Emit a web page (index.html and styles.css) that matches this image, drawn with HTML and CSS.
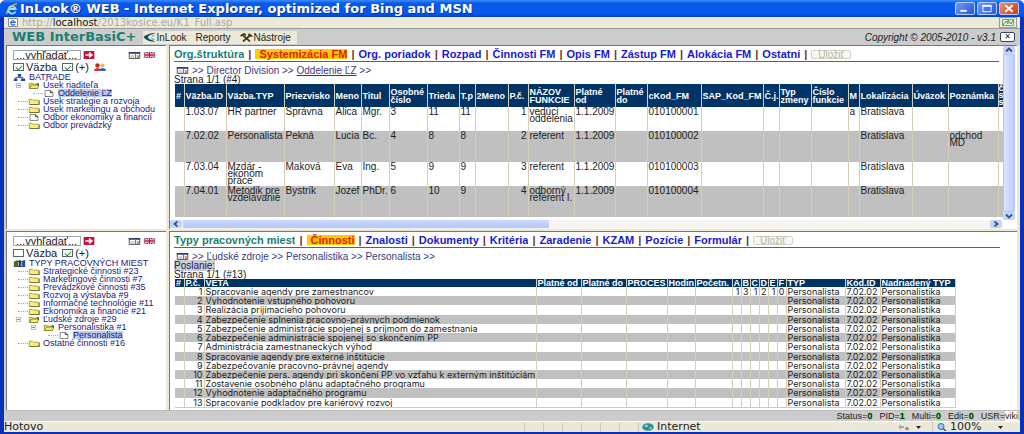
FILE: index.html
```html
<!DOCTYPE html>
<html lang="sk">
<head>
<meta charset="utf-8">
<title>InLook® WEB</title>
<link rel="stylesheet" href="styles.css">
</head>
<body>
<svg class="defs" aria-hidden="true">
  <symbol id="folder" viewBox="0 0 12 8"><path d="M.5 1.5h3.5l1 1h6.500v5H.5z" fill="#f5ef7a" stroke="#a39a3c"/><path d="M1 7.500h11V3" fill="none" stroke="#6d6628"/></symbol>
  <symbol id="open" viewBox="0 0 12 8"><path d="M.5 7.500v-6h3.500l1 1h5v5z" fill="#e8dd55" stroke="#a39a3c"/><path d="M1 7.500l2-4h8.500l-1.500 4z" fill="#f5ef7a" stroke="#82792c"/><path d="M9 2h2v2" stroke="#222" fill="none"/></symbol>
  <symbol id="page" viewBox="0 0 12 8"><path d="M1.500.5h6l3 2.500v4.500h-9z" fill="#fff" stroke="#777"/><path d="M7.500.5v2.500h3" fill="none" stroke="#333"/></symbol>
  <symbol id="minus" viewBox="0 0 7 7"><path d="M.5.5h6v6h-6z" fill="#fff" stroke="#999"/><path d="M2 3.500h3" stroke="#222"/></symbol>
  <symbol id="card" viewBox="0 0 13 8"><path d="M.5.5h12v7H.5z" fill="#fff" stroke="#444"/><path d="M0 1h13" stroke="#333a70" stroke-width="2"/><path d="M2 4.500h4M2 6h4" stroke="#aaa"/><path d="M7.500 2v5" stroke="#555"/><path d="M9 4.500h2.500M9 6h2.500" stroke="#a33"/></symbol>
  <symbol id="flag" viewBox="0 0 13 7"><path d="M0 0h13v7H0z" fill="#35408c"/><path d="M0 0l13 7M13 0L0 7" stroke="#fff" stroke-width="1.600"/><path d="M0 0l13 7M13 0L0 7" stroke="#c23" stroke-width=".7"/><path d="M6.500 0v7M0 3.500h13" stroke="#fff" stroke-width="3"/><path d="M6.500 0v7M0 3.500h13" stroke="#c8102e" stroke-width="1.700"/></symbol>
  <symbol id="go" viewBox="0 0 12 9"><path d="M0 0h12v9H0z" fill="#c8103c"/><path d="M2 4.500h6M6 1.800l3.200 2.700L6 7.200" fill="none" stroke="#fff" stroke-width="1.800"/></symbol>
  <symbol id="left" viewBox="0 0 12 8"><path d="M7.500 1.500L4.500 4l3 2.500" fill="none" stroke="#3a5488" stroke-width="1.800"/></symbol>
  <symbol id="right" viewBox="0 0 12 8"><path d="M4.500 1.500l3 2.500-3 2.500" fill="none" stroke="#3a5488" stroke-width="1.800"/></symbol>
  <symbol id="up" viewBox="0 0 12 8"><path d="M3 5.500l3-3 3 3" fill="none" stroke="#3a5488" stroke-width="1.800"/></symbol>
  <symbol id="down" viewBox="0 0 12 8"><path d="M3 2.500l3 3 3-3" fill="none" stroke="#3a5488" stroke-width="1.800"/></symbol>
</svg>
<div class="window">
  <header class="titlebar">
    <svg class="ie" viewBox="0 0 12 12"><path d="M9.500 8.500A3.700 3.700 0 1 1 9.700 6H3.500" fill="none" stroke="#9fe0ff" stroke-width="1.800"/><path d="M1 11C0 8 6 1 11 1" fill="none" stroke="#f7c93c" stroke-width="1.200"/></svg>
    <h1 class="caption">InLook® WEB - Internet Explorer, optimized for Bing and MSN</h1>
    <button class="wbtn" aria-label="Minimize"><svg viewBox="0 0 18 12"><path d="M4 8.500h7" stroke="#fff" stroke-width="2"/></svg></button>
    <button class="wbtn" aria-label="Maximize"><svg viewBox="0 0 18 12"><path d="M4.500 3h9v6.500h-9z" fill="none" stroke="#fff"/><path d="M4 3h10" stroke="#fff" stroke-width="2"/></svg></button>
    <button class="wbtn close" aria-label="Close"><svg viewBox="0 0 18 12"><path d="M5 2.500l8 7M13 2.500l-8 7" stroke="#fff" stroke-width="2"/></svg></button>
  </header>
  <div class="address">
    <svg class="favicon" viewBox="0 0 10 9"><path d="M.5.5h9v8h-9z" fill="#fff" stroke="#889"/><path d="M7 6A2.200 2.200 0 1 1 7.200 4.500H3" fill="none" stroke="#2765c8" stroke-width="1.200"/></svg>
    <span class="url">http://<b>localhost</b>/2013kosice.eu/K1_Full.asp</span>
    <button class="compat" aria-label="Compatibility view"><svg viewBox="0 0 16 9"><path d="M2.500 1.500h11v6h-11z" fill="#e8f5e4" stroke="#7c9c78"/><path d="M3 7l3-4 2 3V2l3 4 2-4" fill="none" stroke="#3f9a4b"/></svg></button>
  </div>
  <div class="page">
    <nav class="toolbar">
      <strong class="brand">WEB InterBasiC+</strong>
      <div class="menu">
        <a href="#"><svg class="eye" viewBox="0 0 13 9"><path d="M12.500 0C8 0 3 1.500.5 4 3 7.500 8 9 12.500 8.800L9 7C6 6.500 5 5 5 4s2-2.500 4-2.500z" fill="#164e68"/><path d="M12 2a3.500 2.500 0 1 0 0 5L8 4.500z" fill="#2a93a8"/></svg>InLook</a>
        <a href="#">Reporty</a>
        <a href="#"><svg class="eye" viewBox="0 0 13 9"><path d="M2 1.500l8 7M11 1.500l-8 7" stroke="#443a18" stroke-width="1.700"/><path d="M.5 3L4 .8l2 1.400M9 .5v2.500h3.500" fill="none" stroke="#443a18" stroke-width="1.500"/></svg>Nástroje</a>
      </div>
      <span class="copy">Copyright © 2005-2010 - v3.1</span>
      <button class="xbtn" aria-label="Zavrieť">✕</button>
    </nav>
    <main class="frames">
      <section class="side">
        <div class="search"><input class="find" aria-label="Vyhľadať" value="...vyhľadať..."><button class="icon" aria-label="Hľadať"><svg class="go"><use href="#go"/></svg></button><span class="tools"><svg class="card"><use href="#card"/></svg><svg class="flag"><use href="#flag"/></svg></span></div>
        <div class="checks"><label><input type="checkbox" checked>Väzba</label><label><input type="checkbox" checked>(+)</label>
          <svg class="people" viewBox="0 0 12 8"><circle cx="3.500" cy="2.500" r="2.200" fill="#a33a20"/><path d="M0 8c0-4 7-4 7 0z" fill="#d33"/><circle cx="8.500" cy="2.500" r="2" fill="#f1b84a"/><path d="M5.500 8c0-4 6.500-4 6.500 0z" fill="#2f62c4"/></svg></div>
        <ul class="tree">
          <li class="root"><svg class="rooticon" viewBox="0 0 13 8"><path d="M4.500 0h4v3h-4zM0 5h4v3H0zM8 5h5v3H8z" fill="#2148b5"/><path d="M2 5V4h8.500v1M6.500 3v1" fill="none" stroke="#2148b5"/></svg>BATRADE</li>
          <li class="l1 has"><svg class="minus"><use href="#minus"/></svg><svg class="node"><use href="#open"/></svg><a href="#">Úsek riaditeľa</a></li>
          <li class="l2"><svg class="node"><use href="#page"/></svg><a href="#" class="sel">Oddelenie ĽZ</a></li>
          <li class="l1"><svg class="node"><use href="#folder"/></svg><a href="#">Úsek stratégie a rozvoja</a></li>
          <li class="l1"><svg class="node"><use href="#folder"/></svg><a href="#">Úsek marketingu a obchodu</a></li>
          <li class="l1"><svg class="node"><use href="#page"/></svg><a href="#">Odbor ekonomiky a financií</a></li>
          <li class="l1"><svg class="node"><use href="#folder"/></svg><a href="#">Odbor prevádzky</a></li>
        </ul>
      </section>
      <section class="content upper">
        <div class="scroller">
          <div class="inner">
            <nav class="tabs"><strong>Org.štruktúra</strong><a href="#" class="on">Systemizácia FM</a><a href="#">Org. poriadok</a><a href="#">Rozpad</a><a href="#">Činnosti FM</a><a href="#">Opis FM</a><a href="#">Zástup FM</a><a href="#">Alokácia FM</a><a href="#">Ostatní</a><button class="save" disabled>Uložiť</button></nav>
            <p class="crumbs"><svg class="card"><use href="#card"/></svg><span>&gt;&gt; Director Division &gt;&gt; <u>Oddelenie ĽZ</u> &gt;&gt;</span></p>
            <p class="count">Strana 1/1 (#4)</p>
            <table class="data people-grid">
              <colgroup><col><col><col><col><col><col><col><col><col><col><col><col><col><col><col><col><col><col><col><col><col><col><col><col></colgroup>
              <thead><tr><th>#</th><th>Väzba.ID</th><th>Väzba.TYP</th><th>Priezvisko</th><th>Meno</th><th>Titul</th><th>Osobné číslo</th><th>Trieda</th><th>T.p</th><th>2Meno</th><th>P.č.</th><th>NÁZOV FUNKCIE</th><th>Platné od</th><th>Platné do</th><th>cKod_FM</th><th>SAP_Kod_FM</th><th>Č.j.</th><th>Typ zmeny</th><th>Číslo funkcie</th><th>M</th><th>Lokalizácia</th><th>Úväzok</th><th>Poznámka</th><th class="last">č s s</th></tr></thead>
              <tbody>
              <tr class="short"><td></td><td>1.03.07</td><td>HR partner</td><td>Správna</td><td>Alica</td><td>Mgr.</td><td>3</td><td>11</td><td>11</td><td></td><td class="n">1</td><td>vedúci oddelenia</td><td>1.1.2009</td><td></td><td>010100001</td><td></td><td></td><td></td><td></td><td>a</td><td>Bratislava</td><td></td><td></td><td></td></tr>
              <tr class="tall"><td></td><td>7.02.02</td><td>Personalista</td><td>Pekná</td><td>Lucia</td><td>Bc.</td><td>4</td><td>8</td><td>8</td><td></td><td class="n">2</td><td>referent</td><td>1.1.2009</td><td></td><td>010100002</td><td></td><td></td><td></td><td></td><td></td><td>Bratislava</td><td></td><td>odchod MD</td><td></td></tr>
              <tr class="short"><td></td><td>7.03.04</td><td>Mzdár - ekonóm práce</td><td>Maková</td><td>Eva</td><td>Ing.</td><td>5</td><td>9</td><td>9</td><td></td><td class="n">3</td><td>referent</td><td>1.1.2009</td><td></td><td>010100003</td><td></td><td></td><td></td><td></td><td></td><td>Bratislava</td><td></td><td></td><td></td></tr>
              <tr class="tall"><td></td><td>7.04.01</td><td>Metodik pre vzdelávanie</td><td>Bystrík</td><td>Jozef</td><td>PhDr.</td><td>6</td><td>10</td><td>9</td><td></td><td class="n">4</td><td>odborný referent I.</td><td>1.1.2009</td><td></td><td>010100004</td><td></td><td></td><td></td><td></td><td></td><td>Bratislava</td><td></td><td></td><td></td></tr>
              </tbody>
            </table>
          </div>
          <div class="vbar"><svg class="arrow"><use href="#up"/></svg><span class="vthumb"></span><svg class="arrow"><use href="#down"/></svg></div>
        </div>
        <div class="hbar"><svg class="arrow"><use href="#left"/></svg><span class="hthumb"></span><svg class="arrow"><use href="#right"/></svg></div>
      </section>
      <section class="side">
        <div class="search"><input class="find" aria-label="Vyhľadať" value="...vyhľadať..."><button class="icon" aria-label="Hľadať"><svg class="go"><use href="#go"/></svg></button><span class="tools"><svg class="card"><use href="#card"/></svg><svg class="flag"><use href="#flag"/></svg></span></div>
        <div class="checks"><label><input type="checkbox">Väzba</label><label><input type="checkbox" checked>(+)</label></div>
        <ul class="tree">
          <li class="root"><svg class="rooticon" viewBox="0 0 13 8"><path d="M0 2l4-2v8H0z" fill="#4c6a2c"/><path d="M4 1l4-1v8H4z" fill="#222"/><path d="M8 1.500L13 0v8H8z" fill="#2148b5"/><path d="M9 2v5M5.500 2v5" stroke="#cdd"/></svg>TYPY PRACOVNÝCH MIEST</li>
          <li class="l1"><svg class="node"><use href="#folder"/></svg><a href="#">Strategické činnosti #23</a></li>
          <li class="l1"><svg class="node"><use href="#folder"/></svg><a href="#">Marketingové činnosti #7</a></li>
          <li class="l1"><svg class="node"><use href="#folder"/></svg><a href="#">Prevádzkové činnosti #35</a></li>
          <li class="l1"><svg class="node"><use href="#folder"/></svg><a href="#">Rozvoj a výstavba #9</a></li>
          <li class="l1"><svg class="node"><use href="#folder"/></svg><a href="#">Informačné technológie #11</a></li>
          <li class="l1"><svg class="node"><use href="#folder"/></svg><a href="#">Ekonomika a financie #21</a></li>
          <li class="l1 has"><svg class="minus"><use href="#minus"/></svg><svg class="node"><use href="#open"/></svg><a href="#">Ľudské zdroje #29</a></li>
          <li class="l2 has"><svg class="minus"><use href="#minus"/></svg><svg class="node"><use href="#open"/></svg><a href="#">Personalistika #1</a></li>
          <li class="l3"><svg class="node"><use href="#page"/></svg><a href="#" class="sel">Personalista</a></li>
          <li class="l1"><svg class="node"><use href="#folder"/></svg><a href="#">Ostatné činnosti #16</a></li>
        </ul>
      </section>
      <section class="content">
        <div class="inner lower">
          <nav class="tabs"><strong>Typy pracovných miest</strong><a href="#" class="on">Činnosti</a><a href="#">Znalosti</a><a href="#">Dokumenty</a><a href="#">Kritéria</a><a href="#">Zaradenie</a><a href="#">KZAM</a><a href="#">Pozície</a><a href="#">Formulár</a><button class="save" disabled>Uložiť</button></nav>
          <p class="crumbs"><svg class="card"><use href="#card"/></svg><span>&gt;&gt; Ľudské zdroje &gt;&gt; Personalistika &gt;&gt; Personalista &gt;&gt;</span></p>
          <p class="count"><span class="mark">Poslanie:</span></p>
          <p class="count">Strana 1/1 (#13)</p>
          <table class="data jobs">
            <colgroup><col><col><col><col><col><col><col><col><col><col><col><col><col><col><col><col><col></colgroup>
            <thead><tr><th>#</th><th>P.č.</th><th>VETA</th><th>Platné od</th><th>Platné do</th><th>PROCES</th><th>Hodin</th><th>Početn.</th><th>A</th><th>B</th><th>C</th><th>D</th><th>E</th><th>F</th><th>TYP</th><th>Kód.ID</th><th>Nadriadený TYP</th></tr></thead>
            <tbody>
            <tr><td></td><td class="n">1</td><td>Spracovanie agendy pre zamestnancov</td><td></td><td></td><td></td><td></td><td></td><td class="n">1</td><td class="n">3</td><td class="n">1</td><td class="n">2</td><td class="n">1</td><td class="n">0</td><td>Personalista</td><td>7.02.02</td><td>Personalistika</td></tr>
            <tr><td></td><td class="n">2</td><td>Vyhodnotenie vstupného pohovoru</td><td></td><td></td><td></td><td></td><td></td><td></td><td></td><td></td><td></td><td></td><td></td><td>Personalista</td><td>7.02.02</td><td>Personalistika</td></tr>
            <tr><td></td><td class="n">3</td><td>Realizácia prijímacieho pohovoru</td><td></td><td></td><td></td><td></td><td></td><td></td><td></td><td></td><td></td><td></td><td></td><td>Personalista</td><td>7.02.02</td><td>Personalistika</td></tr>
            <tr><td></td><td class="n">4</td><td>Zabezpečenie splnenia pracovno-právnych podmienok</td><td></td><td></td><td></td><td></td><td></td><td></td><td></td><td></td><td></td><td></td><td></td><td>Personalista</td><td>7.02.02</td><td>Personalistika</td></tr>
            <tr><td></td><td class="n">5</td><td>Zabezpečenie administrácie spojenej s príjmom do zamestnania</td><td></td><td></td><td></td><td></td><td></td><td></td><td></td><td></td><td></td><td></td><td></td><td>Personalista</td><td>7.02.02</td><td>Personalistika</td></tr>
            <tr><td></td><td class="n">6</td><td>Zabezpečenie administrácie spojenej so skončením PP</td><td></td><td></td><td></td><td></td><td></td><td></td><td></td><td></td><td></td><td></td><td></td><td>Personalista</td><td>7.02.02</td><td>Personalistika</td></tr>
            <tr><td></td><td class="n">7</td><td>Administrácia zamestnaneckých výhod</td><td></td><td></td><td></td><td></td><td></td><td></td><td></td><td></td><td></td><td></td><td></td><td>Personalista</td><td>7.02.02</td><td>Personalistika</td></tr>
            <tr><td></td><td class="n">8</td><td>Spracovanie agendy pre externé inštitúcie</td><td></td><td></td><td></td><td></td><td></td><td></td><td></td><td></td><td></td><td></td><td></td><td>Personalista</td><td>7.02.02</td><td>Personalistika</td></tr>
            <tr><td></td><td class="n">9</td><td>Zabezpečovanie pracovno-právnej agendy</td><td></td><td></td><td></td><td></td><td></td><td></td><td></td><td></td><td></td><td></td><td></td><td>Personalista</td><td>7.02.02</td><td>Personalistika</td></tr>
            <tr><td></td><td class="n">10</td><td>Zabezpečenie pers. agendy pri skončení PP vo vzťahu k externým inštitúciám</td><td></td><td></td><td></td><td></td><td></td><td></td><td></td><td></td><td></td><td></td><td></td><td>Personalista</td><td>7.02.02</td><td>Personalistika</td></tr>
            <tr><td></td><td class="n">11</td><td>Zostavenie osobného plánu adaptačného programu</td><td></td><td></td><td></td><td></td><td></td><td></td><td></td><td></td><td></td><td></td><td></td><td>Personalista</td><td>7.02.02</td><td>Personalistika</td></tr>
            <tr><td></td><td class="n">12</td><td>Vyhodnotenie adaptačného programu</td><td></td><td></td><td></td><td></td><td></td><td></td><td></td><td></td><td></td><td></td><td></td><td>Personalista</td><td>7.02.02</td><td>Personalistika</td></tr>
            <tr><td></td><td class="n">13</td><td>Spracovanie podkladov pre kariérový rozvoj</td><td></td><td></td><td></td><td></td><td></td><td></td><td></td><td></td><td></td><td></td><td></td><td>Personalista</td><td>7.02.02</td><td>Personalistika</td></tr>
            </tbody>
          </table>
        </div>
      </section>
    </main>
    <div class="appstatus"><span>Status=<b>0</b></span><span>PID=<b>1</b></span><span>Multi=<b>0</b></span><span>Edit=<b>0</b></span><span>USR=<i>viki</i></span></div>
  </div>
  <footer class="iestatus">
    <span class="ready">Hotovo</span>
    <span class="cells"><i></i><i></i><i></i><i></i><i></i><i></i></span>
    <span class="zone"><svg class="globe" viewBox="0 0 12 8"><ellipse cx="6" cy="4" rx="5.800" ry="3.800" fill="#2b8f9c"/><path d="M2 3c2-2 4-1 4 0s-2 2-4 0M7 5c1-1 3-1 3 0s-2 2-3 0" fill="#8fe09a"/></svg>Internet</span>
    <span class="lock"><svg viewBox="0 0 30 8"><path d="M2 4l3-3v2h3v2H5v2z" fill="#aaa"/><path d="M9 6c0-3 4-3 4 0v1H9z" fill="#999"/><path d="M20 3h5l-2.500 3z" fill="#222"/></svg></span>
    <button class="zoom"><svg class="lens" viewBox="0 0 10 8"><circle cx="4" cy="3.500" r="3" fill="#9cc8f5" stroke="#3a6fc0"/><path d="M6 5.500L9 8" stroke="#555" stroke-width="1.500"/></svg>100%<svg class="caret" viewBox="0 0 5 3"><path d="M0 0h5L2.500 3z" fill="#222"/></svg></button>
  </footer>
</div>
</body>
</html>
```
FILE: styles.css
```css
* { box-sizing: border-box; }
body { margin: 0; font: 10px/9px "Liberation Sans", Arial, sans-serif; color: #222; }
h1, p, ul { margin: 0; padding: 0; font-size: inherit; }
ul { list-style: none; }
a { color: inherit; text-decoration: none; }
button, input { font: inherit; color: inherit; margin: 0; padding: 0; }
svg { display: block; flex: none; }
.defs { position: absolute; width: 0; height: 0; }

.window { min-height: 100vh; display: flex; flex-direction: column; padding: 0 4px 2px; background: #0a2fb8; border-radius: 6px 6px 0 0; overflow: hidden; }
.titlebar { display: flex; align-items: center; gap: 2px; height: 17px; margin: 0 -4px; padding: 0 5px 0 6px; background: linear-gradient(#3a8cff, #0a58ea 20%, #0458ee 80%, #0342c4); color: #fff; }
.ie { width: 12px; height: 12px; }
.caption { flex: 1; font: bold 12px/14px "DejaVu Sans", Verdana, sans-serif; font-size: 13px; white-space: nowrap; text-shadow: 1px 1px #0a2f90; }
.wbtn { width: 20px; height: 13px; border: 1px solid #b8cdf8; border-radius: 2px; background: linear-gradient(135deg, #6f9bf5, #2456d8); }
.wbtn svg { width: 18px; height: 11px; }
.wbtn.close { background: linear-gradient(135deg, #f09070, #d03a14); }

.address { display: flex; align-items: center; gap: 4px; height: 12px; padding: 0 3px 0 4px; background: #ece9d8; color: #aaa; border-bottom: 1px solid #999; }
.favicon { width: 10px; height: 9px; }
.url { flex: 1; font: 10px/10px "DejaVu Sans", Verdana, sans-serif; }
.url b { font-weight: normal; color: #111; }
.compat { width: 18px; height: 11px; border: 1px solid #999; background: #ece9d8; }
.compat svg { width: 16px; height: 9px; }

.page { flex: 1; display: flex; flex-direction: column; background: #ccc; padding-left: 2px; }
.toolbar { display: flex; align-items: center; height: 16px; padding: 0 5px 0 6px; }
.brand { color: #1a8073; font: bold 13px/14px "DejaVu Sans", Verdana, sans-serif; margin-right: 6px; }
.menu { display: flex; gap: 9px; background: #ece9d8; font-size: 10px; line-height: 13px; padding-right: 6px; }
.menu a { display: flex; align-items: center; gap: 1px; }
.eye { width: 13px; height: 9px; }
.copy { margin-left: auto; font-size: 10px; font-style: italic; }
.xbtn { width: 15px; height: 10px; margin-left: 4px; border: 1px solid #345; border-radius: 2px; background: #fff; font: 8px/8px "DejaVu Sans", sans-serif; }

.frames { flex: 1; display: grid; grid-template-columns: 160px minmax(0, 1fr); grid-template-rows: 184px 1fr; gap: 2px 3px; background: #ece9d8; padding-right: 3px; }
.side, .content { background: #fff; border-top: 1px solid #777; border-left: 1px solid #777; min-width: 0; overflow: hidden; }
.side { padding: 3px 6px; }
.search { display: flex; align-items: center; height: 12px; }
.find { width: 68px; height: 10px; padding: 0 2px; border: 1px solid #9ab; background: #fff; font-size: 11px; line-height: 8px; }
.icon { border: 0; background: none; margin-left: 2px; }
.go { width: 12px; height: 8px; }
.tools { display: flex; gap: 2px; margin-left: auto; padding-right: 4px; }
.card { width: 13px; height: 7px; }
.flag { width: 13px; height: 6px; }
.checks { display: flex; align-items: center; gap: 5px; height: 12px; font-size: 11px; }
.checks label { display: flex; align-items: center; gap: 2px; }
.checks input { appearance: none; width: 11px; height: 8px; border: 1px solid #567; background: #fff; display: grid; place-items: center; }
.checks input:checked::after { content: ""; width: 5px; height: 3px; border: solid #2a9a2a; border-width: 0 0 1px 1px; transform: rotate(-45deg); }
.people { width: 12px; height: 8px; }
.tree { color: #22227c; font-size: 9px; line-height: 8px; }
.tree li { display: flex; align-items: center; min-height: 8px; }
.tree svg { margin-right: 3px; }
.rooticon { width: 13px; height: 7px; }
.node { width: 12px; height: 7px; }
.minus { width: 7px; height: 5px; }
.tree .minus { margin-right: 6px; }
.l1 { padding-left: 15px; }
.l1.has { padding-left: 2px; }
.l2 { padding-left: 30px; }
.l2.has { padding-left: 17px; }
.l3 { padding-left: 45px; }
.tree li:not(.root):not(.has)::before { content: ""; width: 10px; margin-left: -10px; border-top: 1px dotted #aaa; }
.sel { background: #bccbee; }

.content { display: flex; flex-direction: column; }
.scroller { flex: 1; display: flex; min-height: 0; }
.inner { flex: 1; min-width: 0; overflow: hidden; padding: 1px 0 0 4px; }
.inner.lower { padding-right: 17px; }
.tabs { display: flex; align-items: center; height: 15px; border-bottom: 1px solid #1a8073; color: #1a1acc; font: bold 11px/10px "Liberation Sans", Arial, sans-serif; white-space: nowrap; }
.upper .tabs { margin-right: 4px; }
.tabs strong { color: #1a8073; }
.tabs strong::after, .tabs a::after { content: "|"; color: #633; padding: 0 4px; background: #fff; }
.tabs .on { color: #e22000; background: #fc0; padding-left: 4px; }
.save { height: 9px; padding: 0 6px; border: 1px solid #d5d2c4; border-radius: 2px; background: #f8f7f2; color: #b5b2a4; font: 10px/7px "Liberation Sans", Arial, sans-serif; }
.crumbs { display: flex; align-items: center; gap: 3px; margin-left: 2px; padding-top: 3px; height: 13px; color: #3a3a80; white-space: pre; }
.count { line-height: 9px; }
.mark { background: #ccc; color: #22227c; }

.data { table-layout: fixed; border-collapse: collapse; margin-left: 1px; }
.data th { background: #036; color: #fff; font-size: 9px; line-height: 8px; text-align: left; }
.data th, .data td { padding: 0 1px; border-right: 1px solid #d3ceb8; overflow: hidden; }
.data td { vertical-align: top; }
.data .n { text-align: right; }
.data tbody tr:nth-child(even) { background: #c0c0c0; }
.people-grid { width: 829px; }
.people-grid th { height: 23px; }
.people-grid .last { padding: 0; line-height: 7px; }
.people-grid td { line-height: 7px; padding-top: 1px; }
.short { height: 24px; }
.tall { height: 31px; }
.people-grid col:nth-child(1) { width: 9px; }
.people-grid col:nth-child(2) { width: 42px; }
.people-grid col:nth-child(3) { width: 58px; }
.people-grid col:nth-child(4) { width: 50px; }
.people-grid col:nth-child(5) { width: 27px; }
.people-grid col:nth-child(6) { width: 28px; }
.people-grid col:nth-child(7) { width: 38px; }
.people-grid col:nth-child(8) { width: 32px; }
.people-grid col:nth-child(9) { width: 16px; }
.people-grid col:nth-child(10) { width: 33px; }
.people-grid col:nth-child(11) { width: 20px; }
.people-grid col:nth-child(12) { width: 46px; }
.people-grid col:nth-child(13) { width: 41px; }
.people-grid col:nth-child(14) { width: 32px; }
.people-grid col:nth-child(15) { width: 54px; }
.people-grid col:nth-child(16) { width: 62px; }
.people-grid col:nth-child(17) { width: 16px; }
.people-grid col:nth-child(18) { width: 32px; }
.people-grid col:nth-child(19) { width: 37px; }
.people-grid col:nth-child(20) { width: 11px; }
.people-grid col:nth-child(21) { width: 53px; }
.people-grid col:nth-child(22) { width: 36px; }
.people-grid col:nth-child(23) { width: 50px; }
.people-grid col:nth-child(24) { width: 6px; }

.jobs { width: 780px; height: 129px; border-bottom: 1px solid #d3ceb8; white-space: nowrap; }
.jobs td { font: 9px/9px Inter, "Liberation Sans", sans-serif; }
.jobs col:nth-child(1) { width: 9px; }
.jobs col:nth-child(2) { width: 20px; }
.jobs col:nth-child(3) { width: 332px; }
.jobs col:nth-child(4), .jobs col:nth-child(5) { width: 45px; }
.jobs col:nth-child(6) { width: 41px; }
.jobs col:nth-child(7) { width: 28px; }
.jobs col:nth-child(8) { width: 37px; }
.jobs col:nth-child(n+9):nth-child(-n+14) { width: 9px; }
.jobs col:nth-child(15) { width: 59px; }
.jobs col:nth-child(16) { width: 35px; }
.jobs col:nth-child(17) { width: 75px; }

.vbar { width: 14px; display: flex; flex-direction: column; padding-right: 2px; background: #fff; }
.vthumb { flex: 1; background: linear-gradient(90deg, #dbe5fe, #bccdfb); border: 1px solid #b4c6f4; }
.arrow { width: 12px; height: 8px; border-radius: 2px; background: #c3d3fb; }
.hbar { display: flex; justify-content: space-between; height: 9px; margin-right: 15px; background: #f6f5f0; }
.hthumb { width: 44%; margin: 0 auto 0 1px; height: 8px; background: linear-gradient(#cbd9fd, #b4c8f8); border-radius: 1px; }

.appstatus { display: flex; justify-content: flex-end; align-items: center; gap: 7px; height: 11px; padding-right: 2px; border-top: 1px solid #bbb; font-size: 9px; }
.appstatus b { color: #111; background: #9fdf9f; }
.appstatus i { background: #fff; font-style: normal; }
.iestatus { display: flex; align-items: center; height: 11px; background: #ece9d8; border-top: 1px solid #fff; font: 11px/10px "DejaVu Sans", Verdana, sans-serif; }
.ready { flex: 1; }
.cells { display: flex; }
.cells i { width: 19px; height: 9px; border-left: 1px solid #cfcbb8; }
.zone { display: flex; align-items: center; gap: 3px; width: 258px; padding-left: 3px; border-left: 1px solid #cfcbb8; }
.globe { width: 12px; height: 8px; }
.lock { width: 36px; }
.lock svg { width: 30px; height: 8px; }
.zoom { display: flex; align-items: center; width: 88px; gap: 3px; border: 0; border-left: 1px solid #cfcbb8; padding-left: 4px; background: none; }
.lens { width: 10px; height: 8px; }
.caret { width: 5px; height: 3px; margin-left: 14px; }
```
